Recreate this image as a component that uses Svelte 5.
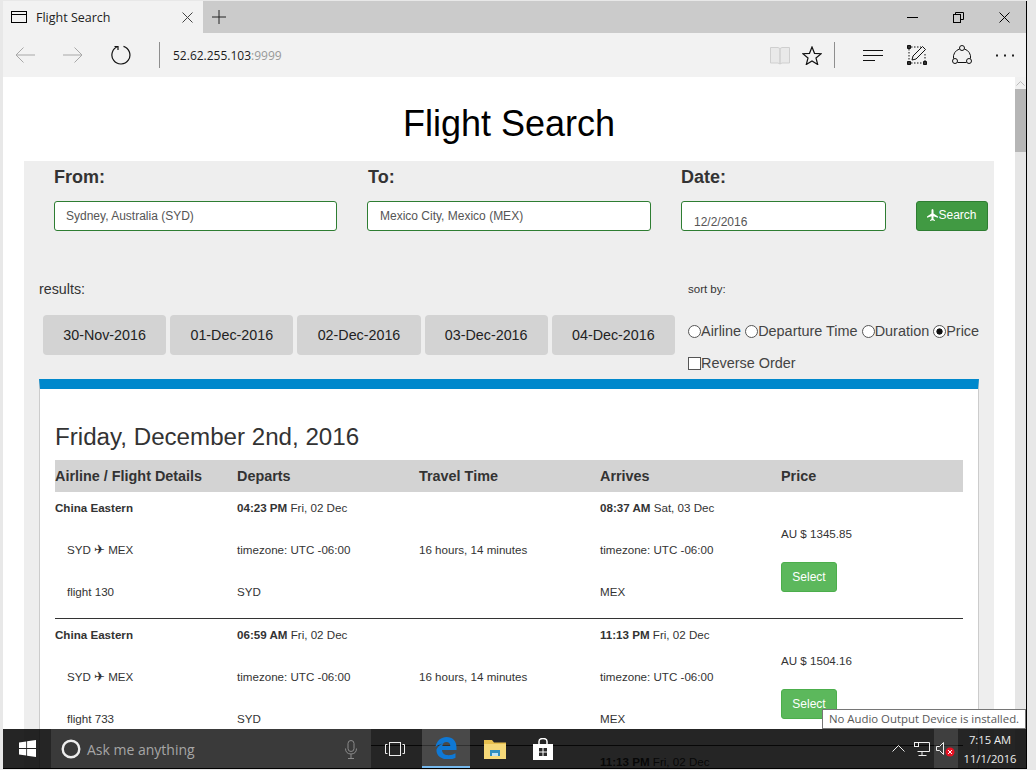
<script>
  const dates = ['30-Nov-2016', '01-Dec-2016', '02-Dec-2016', '03-Dec-2016', '04-Dec-2016'];
  const sorts = [
    { label: 'Airline', checked: false },
    { label: 'Departure Time', checked: false },
    { label: 'Duration', checked: false },
    { label: 'Price', checked: true }
  ];
  const flights = [
    { airline: 'China Eastern', no: 'flight 130', depTime: '04:23 PM', depDate: 'Fri, 02 Dec', arrTime: '08:37 AM', arrDate: 'Sat, 03 Dec', price: 'AU $ 1345.85' },
    { airline: 'China Eastern', no: 'flight 733', depTime: '06:59 AM', depDate: 'Fri, 02 Dec', arrTime: '11:13 PM', arrDate: 'Fri, 02 Dec', price: 'AU $ 1504.16' }
  ];
</script>

<div class="window">
  <div class="tabbar">
    <div class="tab">
      <svg width="17" height="13" viewBox="0 0 17 13" fill="none" stroke="#000"><rect x="0.5" y="0.5" width="15" height="11" /><path d="M0 3.5h16" /></svg>
      <span class="tab-title">Flight Search</span>
      <svg class="tab-close" width="11" height="11" viewBox="0 0 11 11" stroke="#444"><path d="M0.5 0.5l10 10M10.5 0.5l-10 10" /></svg>
    </div>
    <div class="newtab">
      <svg width="14" height="14" viewBox="0 0 14 14" stroke="#222"><path d="M7 0v14M0 7h14" /></svg>
    </div>
    <div class="winctl">
      <div class="winbtn"><svg width="11" height="11" viewBox="0 0 11 11" stroke="#000"><path d="M0 5.5h11" /></svg></div>
      <div class="winbtn"><svg width="11" height="11" viewBox="0 0 11 11" fill="none" stroke="#000"><rect x="0.5" y="2.5" width="7" height="8" /><path d="M2.5 2.5v-2h8v7h-3" /></svg></div>
      <div class="winbtn"><svg width="11" height="11" viewBox="0 0 11 11" stroke="#000"><path d="M0.5 0.5l10 10M10.5 0.5l-10 10" /></svg></div>
    </div>
  </div>

  <div class="toolbar">
    <div class="tool" style="width:44px">
      <svg width="20" height="16" viewBox="0 0 20 16" fill="none" stroke="#a8a8a8"><path d="M20 8H1M8.500 0.500L1 8l7.500 7.500" /></svg>
    </div>
    <div class="tool" style="width:52px">
      <svg width="20" height="16" viewBox="0 0 20 16" fill="none" stroke="#a8a8a8"><path d="M0 8h19M11.500 0.500L19 8l-7.500 7.500" /></svg>
    </div>
    <div class="tool" style="width:44px">
      <svg width="20" height="20" viewBox="0 0 20 20" fill="none" stroke="#111" stroke-width="1.200"><path d="M12.500 1.400A9 9 0 1 1 7 1.500" /><path d="M3.500 1.500H7V5" /></svg>
    </div>
    <div class="sep first"></div>
    <div class="url">52.62.255.103<span>:9999</span></div>
    <div class="tools-right">
      <div class="tool" style="width:32px">
        <svg width="20" height="19" viewBox="0 0 20 19" fill="#e9e9e9" stroke="#cfcfcf"><path d="M0.500 1.500h7.500l2 1v15.500l-2-1h-7.500zM19.500 1.500h-7.500l-2 1v15.500l2-1h7.500z" /></svg>
      </div>
      <div class="tool" style="width:32px">
        <svg width="20" height="19" viewBox="0 0 20 19" fill="none" stroke="#111" stroke-width="1.200"><path d="M10 1l2.500 6.300 6.700.4-5.200 4.300 1.700 6.500-5.700-3.600-5.700 3.600 1.700-6.500-5.200-4.300 6.700-.4z" /></svg>
      </div>
      <div class="sep second"></div>
      <div class="tool" style="width:44px">
        <svg width="20" height="13" viewBox="0 0 20 13" stroke="#111"><path d="M0 1.500h20M0 6.500h20M0 11.500h12" /></svg>
      </div>
      <div class="tool" style="width:44px">
        <svg width="20" height="20" viewBox="0 0 20 20" fill="none" stroke="#111"><path d="M4 2h10M2 4v12M4 18h12M18 9v7" stroke-dasharray="1.500 1.500" /><path d="M0.500 0.500h3v3h-3zM0.500 16.500h3v3h-3zM16.500 16.500h3v3h-3z" fill="#333" /><path d="M6 11L15.500 1.500l3 3L9 14l-4 1z" /></svg>
      </div>
      <div class="tool" style="width:45px">
        <svg width="20" height="20" viewBox="0 0 20 20" fill="none" stroke="#111"><circle cx="10" cy="3" r="2.500" /><circle cx="3" cy="16" r="2.500" /><circle cx="17" cy="16" r="2.500" /><path d="M7.600 4A8.500 8.500 0 0 0 1.500 13.500M12.400 4A8.500 8.500 0 0 1 18.500 13.500M5.500 17.500h9" /></svg>
      </div>
      <div class="tool" style="width:42px">
        <svg width="18" height="3" viewBox="0 0 18 3" fill="#222"><rect y="0.500" width="2" height="2" /><rect x="8" y="0.500" width="2" height="2" /><rect x="16" y="0.500" width="2" height="2" /></svg>
      </div>
    </div>
  </div>

  <div class="viewport">
    <div class="page">
      <h1>Flight Search</h1>
      <div class="panel">
        <form class="search" onsubmit={(e) => e.preventDefault()}>
          <div class="field from">
            <span class="field-label">From:</span>
            <input type="text" value="Sydney, Australia (SYD)" />
          </div>
          <div class="field to">
            <span class="field-label">To:</span>
            <input type="text" value="Mexico City, Mexico (MEX)" />
          </div>
          <div class="field date">
            <span class="field-label">Date:</span>
            <input class="date-input" type="text" value="12/2/2016" />
          </div>
          <button class="search-btn" type="submit">
            <svg width="11" height="14" viewBox="0 0 22 24" fill="#fff"><path d="M11 0c1.300 0 2 1.500 2 3.500V9l9 6v2.500l-9-3V20l3 2.500V24l-5-1.300L6 24v-1.500L9 20v-5.500l-9 3V15l9-6V3.500C9 1.500 9.700 0 11 0z" /></svg><span>Search</span>
          </button>
        </form>

        <div class="results-head">
          <div class="left">
            <div class="results-label">results:</div>
            <div class="dates">
              {#each dates as d}
                <button class="date-btn" type="button">{d}</button>
              {/each}
            </div>
          </div>
          <div class="right">
            <div class="sort-label">sort by:</div>
            <div class="sort-row">
              {#each sorts as s}
                <label class="sort-opt"><input type="radio" name="sort" checked={s.checked} />{s.label}</label>
              {/each}
            </div>
            <label class="reverse"><input type="checkbox" />Reverse Order</label>
          </div>
        </div>

        <div class="card">
          <h2>Friday, December 2nd, 2016</h2>
          <div class="row head">
            <div>Airline / Flight Details</div>
            <div>Departs</div>
            <div>Travel Time</div>
            <div>Arrives</div>
            <div>Price</div>
          </div>
          {#each flights as f}
            <div class="row flight">
              <div class="col">
                <div class="line"><b>{f.airline}</b></div>
                <div class="line indent">SYD <span class="plane">✈</span> MEX</div>
                <div class="line indent">{f.no}</div>
              </div>
              <div class="col">
                <div class="line"><b>{f.depTime}</b> {f.depDate}</div>
                <div class="line">timezone: UTC -06:00</div>
                <div class="line">SYD</div>
              </div>
              <div class="col">
                <div class="line"></div>
                <div class="line">16 hours, 14 minutes</div>
              </div>
              <div class="col">
                <div class="line"><b>{f.arrTime}</b> {f.arrDate}</div>
                <div class="line">timezone: UTC -06:00</div>
                <div class="line">MEX</div>
              </div>
              <div class="col price">
                <div class="line">{f.price}</div>
                <button class="select" type="button">Select</button>
              </div>
            </div>
          {/each}
          <!-- next row is almost all behind the taskbar -->
          <div class="row flight">
            <div></div>
            <div></div>
            <div></div>
            <div class="col"><div class="line"><b>11:13 PM</b> Fri, 02 Dec</div></div>
          </div>
        </div>
      </div>
    </div>

    <div class="scrollbar">
      <div class="arrow">
        <svg width="9" height="5" viewBox="0 0 9 5" fill="none" stroke="#bbb"><path d="M0.500 4.500l4-4 4 4" /></svg>
      </div>
      <div class="thumb"></div>
    </div>

    <div class="tooltip">No Audio Output Device is installed.</div>

    <div class="taskbar">
      <div class="start">
        <svg width="17" height="17" viewBox="0 0 16 16" fill="#fff"><path d="M0 2.300L6.800 1.300V7.600H0zM7.600 1.200L16 0V7.600H7.600zM0 8.400H6.800V14.700L0 13.700zM7.600 8.400H16V16L7.600 14.800z" /></svg>
      </div>
      <div class="cortana">
        <svg width="20" height="20" viewBox="0 0 20 20" fill="none" stroke="#eee" stroke-width="2.400"><circle cx="10" cy="10" r="8.300" /></svg>
        <span>Ask me anything</span>
        <svg class="mic" width="12" height="19" viewBox="0 0 12 19" fill="none" stroke="#8a8a8a"><rect x="3" y="0.500" width="6" height="11" rx="3" /><path d="M0.500 8.500c0 3.500 2 5.500 5.500 5.500s5.500-2 5.500-5.500M6 14v4M3 18.500h6" /></svg>
      </div>
      <div class="task taskview">
        <svg width="20" height="14" viewBox="0 0 20 14" fill="none" stroke="#eee"><rect x="4.500" y="0.500" width="11" height="13" /><path d="M2.500 2.500h-2v9h2M17.500 2.500h2v9h-2" /></svg>
      </div>
      <div class="task edge">
        <svg width="22" height="22" viewBox="0 0 22 22" fill="#0f78d4"><path d="M0.500 10C1.500 3.500 6.500 0 11.500 0c6 0 10 4 10 10.500v2.500H7c.2 3.500 3 5.200 6.500 5.200 2.500 0 5-.7 7-2v4.500c-2 1.200-5 1.800-7.500 1.800C5.500 22.500 1 18 1.500 12.500 2.800 9.500 5 7.800 8 6.500 5 7 2.500 8 .5 10zM7.300 9h8c0-2.500-1.500-4-3.800-4-2.400 0-3.900 1.500-4.200 4z" /></svg>
      </div>
      <div class="task explorer">
        <svg width="22" height="20" viewBox="0 0 22 20"><path d="M0 1h8l2 2.500h12V7H0z" fill="#e8c04f" /><rect y="5" width="22" height="15" fill="#f6d979" /><rect x="6" y="11" width="10" height="6" fill="#2f8fc0" /><path d="M8 17v-3h6v3" fill="#bfe3f3" /></svg>
      </div>
      <div class="task store">
        <svg width="20" height="22" viewBox="0 0 20 22"><path d="M0 6h20v16H0z" fill="#fff" /><path d="M6 6V3.500C6 1.500 7.500 .5 10 .5s4 1 4 3V6" fill="none" stroke="#fff" stroke-width="1.500" /><path d="M6 10h3.500v3.500H6zM10.500 10H14v3.500h-3.500zM6 14.500h3.500V18H6zM10.500 14.500H14V18h-3.500z" fill="#2a2a2a" /></svg>
      </div>
      <div class="tray">
        <svg width="13" height="7" viewBox="0 0 13 7" fill="none" stroke="#eee"><path d="M0.500 6.500l6-6 6 6" /></svg>
        <svg class="net" width="16" height="14" viewBox="0 0 16 14" fill="none" stroke="#eee"><path d="M3.500 0.500h12v9h-12M8 9.500v3.500M4.500 13.500h8" /><rect x="0.500" y="0.500" width="4" height="4" /></svg>
        <div class="sound">
          <svg width="20" height="16" viewBox="0 0 20 16"><path d="M0.500 5.500h3l4-4v12l-4-4h-3z" fill="none" stroke="#eee" /><circle cx="14" cy="11" r="4.500" fill="#e81123" /><path d="M12 9l4 4M16 9l-4 4" stroke="#fff" /></svg>
        </div>
        <div class="clock"><span>7:15 AM</span><span>11/1/2016</span></div>
      </div>
    </div>
  </div>
</div>

<style>
  :global(body) {
    margin: 0;
    background: #e8e8e8;
  }

  .window {
    width: 1036px;
    height: 770px;
    box-sizing: border-box;
    padding: 1px 0 0 3px;
    overflow: hidden;
    font-family: "Liberation Sans", Arial, sans-serif;
    background: #e8e8e8;
  }

  .tabbar,
  .toolbar,
  .viewport {
    width: 1023px;
    border-right: 1px solid #000;
  }

  .tabbar {
    height: 32px;
    display: flex;
    background: #cbcbcb;
  }

  .tab {
    width: 200px;
    background: #f2f2f2;
    display: flex;
    align-items: center;
    padding-left: 8px;
    box-sizing: border-box;
    font-family: "Open Sans", sans-serif;
    font-size: 12.500px;
    color: #222;
  }

  .tab-title {
    margin-left: 8px;
  }

  .tab-close {
    margin-left: auto;
    margin-right: 10px;
  }

  .newtab {
    width: 32px;
    display: flex;
    align-items: center;
    justify-content: center;
  }

  .winctl {
    margin-left: auto;
    display: flex;
  }

  .winbtn {
    width: 46px;
    display: flex;
    align-items: center;
    justify-content: center;
    padding-left: 2px;
    box-sizing: border-box;
  }

  .toolbar {
    height: 44px;
    display: flex;
    align-items: center;
    background: #f2f2f2;
  }

  .tool {
    height: 44px;
    flex: none;
    display: flex;
    align-items: center;
    justify-content: center;
  }

  .sep {
    width: 1px;
    height: 26px;
    background: #8e8e8e;
    flex: none;
  }

  .sep.first {
    margin-left: 16px;
  }

  .sep.second {
    margin: 0 16px 0 6px;
  }

  .url {
    margin-left: 13px;
    font-family: "Open Sans", sans-serif;
    font-size: 12px;
    color: #1c1c1c;
  }

  .url span {
    color: #999;
  }

  .tools-right {
    margin-left: auto;
    display: flex;
    align-items: center;
  }

  .viewport {
    position: relative;
    height: 691px;
    display: flex;
    overflow: hidden;
    background: #fff;
    border-bottom: 1px solid #000;
  }

  .page {
    width: 1012px;
    flex: none;
    color: #333;
  }

  h1 {
    margin: 0;
    padding-top: 24px;
    height: 60px;
    line-height: 46px;
    box-sizing: content-box;
    font-size: 36px;
    font-weight: 400;
    text-align: center;
    color: #000;
  }

  .panel {
    margin: 0 21px;
    padding: 6px 0 0 15px;
    background: #eee;
    height: 700px;
  }

  .search {
    display: flex;
    align-items: flex-end;
    gap: 30px;
    padding-left: 15px;
  }

  .field {
    flex: none;
  }

  .field-label {
    display: block;
    height: 20px;
    line-height: 20px;
    margin-bottom: 14px;
    font-size: 18px;
    font-weight: 700;
  }

  .field input {
    display: block;
    width: 100%;
    height: 30px;
    box-sizing: border-box;
    border: 1px solid #2e7d32;
    border-radius: 3px;
    padding: 0 11px;
    background: #fff;
    font: 12px "Liberation Sans", Arial, sans-serif;
    color: #555;
  }

  .field input.date-input {
    padding: 11px 12px 0;
  }

  .from { width: 283px; }
  .to { width: 284px; }
  .date { width: 205px; }

  .to .field-label {
    padding-left: 1px;
  }

  .to input {
    padding: 0 12px;
  }

  .search-btn {
    width: 72px;
    height: 30px;
    flex: none;
    box-sizing: border-box;
    padding: 0 0 2px;
    display: flex;
    align-items: center;
    justify-content: center;
    border: 1px solid #2e7d32;
    border-radius: 3px;
    background: #419a43;
    color: #fff;
    font: 12px "Liberation Sans", Arial, sans-serif;
  }

  .results-head {
    display: flex;
    margin-top: 48px;
  }

  .left {
    width: 649px;
    flex: none;
  }

  .results-label {
    height: 20px;
    line-height: 20px;
    font-size: 14.300px;
  }

  .dates {
    display: flex;
    gap: 4px;
    margin: 16px 0 0 4px;
  }

  .date-btn {
    width: 123.200px;
    height: 40px;
    padding: 0;
    border: none;
    border-radius: 4px;
    background: #d3d3d3;
    color: #222;
    font: 14.300px "Liberation Sans", Arial, sans-serif;
  }

  .sort-label {
    height: 20px;
    line-height: 20px;
    font-size: 11.500px;
  }

  .sort-row {
    display: flex;
    gap: 4px;
    margin-top: 22px;
    height: 20px;
    white-space: nowrap;
  }

  .sort-opt,
  .reverse {
    display: flex;
    align-items: center;
    height: 20px;
    font-size: 14.450px;
    color: #444;
  }

  .reverse {
    margin-top: 12px;
  }

  .sort-opt input,
  .reverse input {
    appearance: none;
    width: 13px;
    height: 13px;
    margin: 0;
    flex: none;
    border: 1px solid #555;
    background: #fff;
    box-sizing: border-box;
  }

  .sort-opt input {
    border-radius: 50%;
  }

  .sort-opt input:checked {
    background: radial-gradient(circle, #111 0 2.800px, #fff 3.400px);
  }

  .card {
    width: 940px;
    box-sizing: border-box;
    margin-top: 6px;
    border-top: 10px solid #0088cc;
    border-left: 1px solid #ccc;
    border-right: 1px solid #ccc;
    background: #fff;
    padding: 35px 15px 0;
    height: 600px;
  }

  h2 {
    margin: 0 0 10px;
    height: 26px;
    line-height: 26px;
    font-size: 24.150px;
    font-weight: 400;
  }

  .row {
    display: grid;
    grid-template-columns: 182px 182px 181px 181px 182px;
    width: 908px;
  }

  .head {
    height: 32px;
    line-height: 32px;
    background: #d3d3d3;
    font-size: 14.400px;
    font-weight: 700;
  }

  .flight {
    height: 127px;
    box-sizing: border-box;
    padding-top: 1px;
    border-bottom: 1px solid #333;
    font-size: 11.600px;
  }

  .col {
    display: flex;
    flex-direction: column;
    gap: 12px;
  }

  .line {
    height: 30px;
    line-height: 30px;
    white-space: nowrap;
  }

  .indent {
    padding-left: 12px;
  }

  .plane {
    font-family: "DejaVu Sans", sans-serif;
    font-size: 13px;
  }

  .price {
    padding-top: 26px;
    gap: 13px;
  }

  .select {
    width: 56px;
    height: 30px;
    padding: 0;
    border: 1px solid #4cae4c;
    border-radius: 3px;
    background: #5cb85c;
    color: #fff;
    font: 12px "Liberation Sans", Arial, sans-serif;
  }

  .scrollbar {
    width: 11px;
    flex: none;
    background: #e6e6e6;
  }

  .arrow {
    height: 12px;
    background: #f0f0f0;
    display: flex;
    align-items: center;
    justify-content: center;
  }

  .thumb {
    height: 63px;
    background: #b6b6b6;
  }

  .tooltip {
    position: absolute;
    right: 0;
    bottom: 39px;
    width: 204px;
    height: 20px;
    box-sizing: border-box;
    border: 1px solid #767676;
    background: #fff;
    font: 11.400px/18px "Open Sans", sans-serif;
    color: #575757;
    text-align: center;
    white-space: nowrap;
  }

  .taskbar {
    position: absolute;
    left: 0;
    right: 0;
    bottom: 0;
    height: 39px;
    display: flex;
    background: rgba(0, 0, 0, 0.855);
    font-family: "Open Sans", sans-serif;
    color: #eee;
  }

  .start {
    width: 48px;
    display: flex;
    align-items: center;
    justify-content: center;
  }

  .cortana {
    width: 320px;
    display: flex;
    align-items: center;
    gap: 6px;
    padding: 1px 0 0 10px;
    box-sizing: border-box;
    background: #3a3a3a;
    font-size: 14px;
    color: #a6a6a6;
  }

  .mic {
    margin-left: auto;
    margin-right: 14px;
  }

  .task {
    display: flex;
    align-items: center;
    justify-content: center;
    box-sizing: border-box;
  }

  .taskview { width: 48px; }
  .edge {
    width: 48px;
    margin-left: 3px;
    background: rgba(255, 255, 255, 0.17);
    border-bottom: 2px solid #76b9ed;
  }
  .explorer { width: 49px; }
  .store { width: 48px; }

  .tray {
    margin-left: auto;
    display: flex;
    align-items: center;
    padding-right: 4px;
  }

  .net {
    margin: 0 4px 0 9px;
  }

  .sound {
    width: 24px;
    height: 39px;
    display: flex;
    align-items: center;
    justify-content: center;
    background: rgba(255, 255, 255, 0.12);
  }

  .clock {
    width: 64px;
    display: flex;
    flex-direction: column;
    align-items: center;
    gap: 3px;
    padding-top: 1px;
    font-size: 11.200px;
    line-height: 16px;
  }
</style>
